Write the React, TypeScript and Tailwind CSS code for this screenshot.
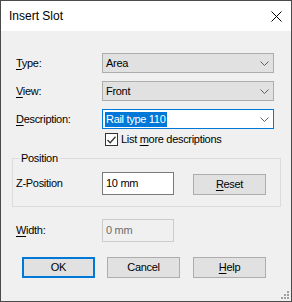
import type { ReactNode } from 'react'

const FONT = { fontFamily: '"Liberation Sans", Arial, sans-serif' }

function Chevron() {
  return (
    <svg width="9" height="5" viewBox="0 0 9 5" className="shrink-0">
      <path d="M0.5 0.5 L4.5 4.5 L8.5 0.5" fill="none" stroke="#606060" strokeWidth="1" />
    </svg>
  )
}

// accelerator letter
function U({ children }: { children: ReactNode }) {
  return <span className="underline underline-offset-[2px]">{children}</span>
}

function Label({ children }: { children: ReactNode }) {
  return <div className="w-[101px] shrink-0 pl-[15px]">{children}</div>
}

function Combo({ value }: { value: string }) {
  return (
    <div className="flex h-[20px] w-[172px] items-center justify-between border border-[#adadad] bg-[#e1e1e1] pl-[3px] pr-[4px]">
      <span>{value}</span>
      <Chevron />
    </div>
  )
}

function Button({ children, primary }: { children: ReactNode; primary?: boolean }) {
  return (
    <div
      className={`flex h-[21px] w-[73px] items-center justify-center bg-[#e1e1e1] ${
        primary ? 'border-2 border-[#0078d7]' : 'border border-[#adadad]'
      }`}
    >
      {children}
    </div>
  )
}

export default function App() {
  return (
    <div
      style={FONT}
      className="relative flex h-[302px] w-[292px] flex-col border border-[#4a4a4a] bg-[#f0f0f0] text-[11px] leading-[13px] tracking-[-0.3px] text-black"
    >
      {/* Title bar */}
      <div className="flex h-[30px] shrink-0 items-center justify-between bg-white pl-[8px] pr-[9px]">
        <span className="text-[12px] tracking-normal">Insert Slot</span>
        <svg width="11" height="11" viewBox="0 0 11 11">
          <path d="M0.5 0.5 L10.5 10.5 M10.5 0.5 L0.5 10.5" stroke="#000" strokeWidth="1" />
        </svg>
      </div>

      {/* Type / View / Description */}
      <div className="mt-[22px] flex items-center">
        <Label>
          <U>T</U>ype:
        </Label>
        <Combo value="Area" />
      </div>
      <div className="mt-[8px] flex items-center">
        <Label>
          <U>V</U>iew:
        </Label>
        <Combo value="Front" />
      </div>
      <div className="mt-[8px] flex items-center">
        <Label>
          <U>D</U>escription:
        </Label>
        <div className="flex h-[20px] w-[172px] items-center justify-between border border-[#0078d7] bg-white pl-[2px] pr-[4px]">
          <span className="bg-[#0078d7] px-[1px] py-[1px] text-white">Rail type 110</span>
          <Chevron />
        </div>
      </div>
      <div className="mt-[4px] flex items-center pl-[104px]">
        <div className="flex h-[13px] w-[13px] items-center justify-center border border-[#333] bg-white">
          <svg width="9" height="8" viewBox="0 0 9 8">
            <path d="M0.5 4 L3.2 6.7 L8.5 0.8" fill="none" stroke="#333" strokeWidth="1.3" />
          </svg>
        </div>
        <span className="ml-[3px]">
          List <U>m</U>ore descriptions
        </span>
      </div>

      {/* Position group */}
      <fieldset className="ml-[11px] mt-[6px] w-[269px] border border-[#dcdcdc] pb-[11px]">
        <legend className="ml-[6px] px-[2px]">Position</legend>
        <div className="mt-[7px] flex items-center">
          <div className="w-[89px] shrink-0 pl-[3px]">Z-Position</div>
          <div className="flex h-[23px] w-[72px] items-center border border-[#7a7a7a] bg-white pl-[3px]">
            10 mm
          </div>
          <div className="ml-[19px] mt-[2px]">
            <Button>
              <U>R</U>eset
            </Button>
          </div>
        </div>
      </fieldset>

      {/* Width */}
      <div className="mt-[12px] flex items-center">
        <Label>
          <U>W</U>idth:
        </Label>
        <div className="flex h-[23px] w-[72px] items-center border border-[#cccccc] bg-[#f0f0f0] pl-[3px] text-[#6d6d6d]">
          0 mm
        </div>
      </div>

      {/* Buttons */}
      <div className="mt-[15px] flex gap-[12px] pl-[21px]">
        <Button primary>OK</Button>
        <Button>Cancel</Button>
        <div className="ml-[1px]">
          <Button>
            <U>H</U>elp
          </Button>
        </div>
      </div>

      {/* size grip */}
      <svg width="8" height="8" viewBox="0 0 8 8" className="absolute bottom-[2px] right-[2px]">
        <g fill="#a0a0a0">
          <rect x="6" y="0" width="2" height="2" />
          <rect x="3" y="3" width="2" height="2" />
          <rect x="6" y="3" width="2" height="2" />
          <rect x="0" y="6" width="2" height="2" />
          <rect x="3" y="6" width="2" height="2" />
          <rect x="6" y="6" width="2" height="2" />
        </g>
      </svg>
    </div>
  )
}
